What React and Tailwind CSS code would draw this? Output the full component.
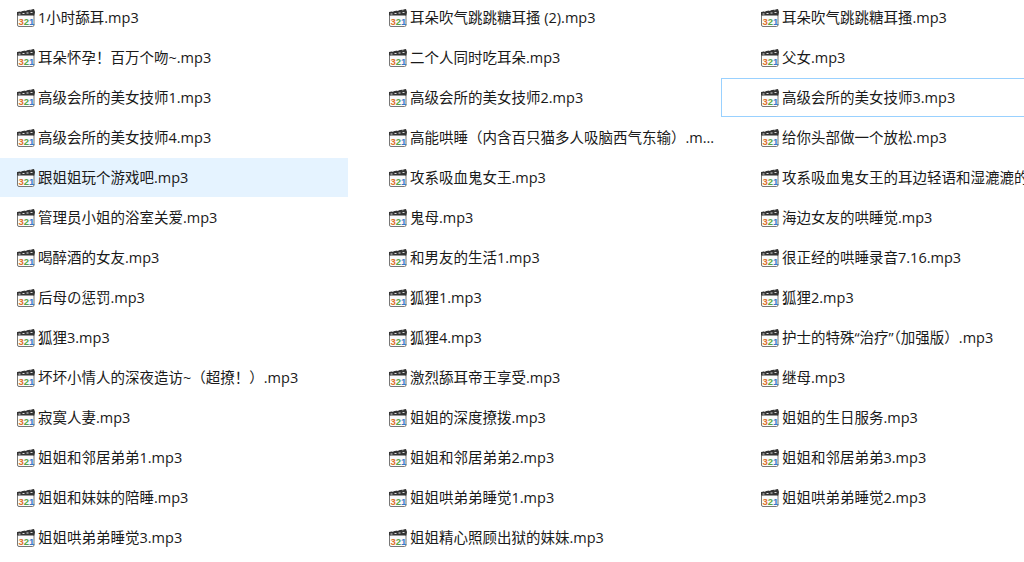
const FILES = [
  ['1小时舔耳.mp3', '耳朵吹气跳跳糖耳搔 (2).mp3', '耳朵吹气跳跳糖耳搔.mp3'],
  ['耳朵怀孕！百万个吻~.mp3', '二个人同时吃耳朵.mp3', '父女.mp3'],
  ['高级会所的美女技师1.mp3', '高级会所的美女技师2.mp3', '高级会所的美女技师3.mp3'],
  ['高级会所的美女技师4.mp3', '高能哄睡（内含百只猫多人吸脑西气东输）.m...', '给你头部做一个放松.mp3'],
  ['跟姐姐玩个游戏吧.mp3', '攻系吸血鬼女王.mp3', '攻系吸血鬼女王的耳边轻语和湿漉漉的舔耳.mp3'],
  ['管理员小姐的浴室关爱.mp3', '鬼母.mp3', '海边女友的哄睡觉.mp3'],
  ['喝醉酒的女友.mp3', '和男友的生活1.mp3', '很正经的哄睡录音7.16.mp3'],
  ['后母の惩罚.mp3', '狐狸1.mp3', '狐狸2.mp3'],
  ['狐狸3.mp3', '狐狸4.mp3', '护士的特殊“治疗”（加强版）.mp3'],
  ['坏坏小情人的深夜造访~（超撩！）.mp3', '激烈舔耳帝王享受.mp3', '继母.mp3'],
  ['寂寞人妻.mp3', '姐姐的深度撩拨.mp3', '姐姐的生日服务.mp3'],
  ['姐姐和邻居弟弟1.mp3', '姐姐和邻居弟弟2.mp3', '姐姐和邻居弟弟3.mp3'],
  ['姐姐和妹妹的陪睡.mp3', '姐姐哄弟弟睡觉1.mp3', '姐姐哄弟弟睡觉2.mp3'],
  ['姐姐哄弟弟睡觉3.mp3', '姐姐精心照顾出狱的妹妹.mp3', null],
];

function FileIcon() {
  return (
    <svg width="20" height="20" viewBox="0 0 20 20" className="shrink-0">
      <rect x="1.5" y="6.5" width="16.5" height="12" rx="1.5" fill="#fbfbfb" stroke="#777" />
      <path d="M1 4 L18 1 L19 4 L18.5 7.5 L1 7.5 Z" fill="#333" />
      <path d="M2.5 6h2M6.5 5.5h2M10.5 5h2M14.5 4.5h2M4 3.2h1.5M9 2.5h1.5M14 1.8h1.5" stroke="#ddd" strokeWidth="1.1" />
      <text x="2.6" y="16.6" fontSize="9.5" fontWeight="700" fontFamily="Liberation Sans, sans-serif" fill="#e0702a">3</text>
      <text x="7.7" y="16.6" fontSize="9.5" fontWeight="700" fontFamily="Liberation Sans, sans-serif" fill="#55a542">2</text>
      <text x="13" y="16.6" fontSize="9.5" fontWeight="700" fontFamily="Liberation Sans, sans-serif" fill="#3a78c9">1</text>
    </svg>
  );
}

function FileItem({ name, state }) {
  if (!name) return <div />;
  let box = 'border border-transparent';
  if (state === 'hover') box = 'border border-transparent bg-[#e5f3ff]';
  if (state === 'focus') box = 'border border-[#99d1ff]';
  return (
    <div className={`flex h-[39px] w-[371px] items-center gap-[2px] pl-[38px] ${box}`}>
      <FileIcon />
      <span className="whitespace-nowrap text-[14.5px] text-[#1a1a1a]">{name}</span>
    </div>
  );
}

export default function App() {
  return (
    <div className="h-[562px] w-[1024px] overflow-hidden bg-white font-['Open_Sans','Noto_Sans_CJK_SC',sans-serif]">
      <div className="ml-[-23px] mt-[-2px] grid w-[1116px] grid-cols-[372px_372px_372px] gap-y-[1px]">
        {FILES.flatMap((row, r) =>
          row.map((name, c) => {
            let state = null;
            if (r === 4 && c === 0) state = 'hover';
            if (r === 2 && c === 2) state = 'focus';
            return <FileItem key={`${r}-${c}`} name={name} state={state} />;
          })
        )}
      </div>
    </div>
  );
}
